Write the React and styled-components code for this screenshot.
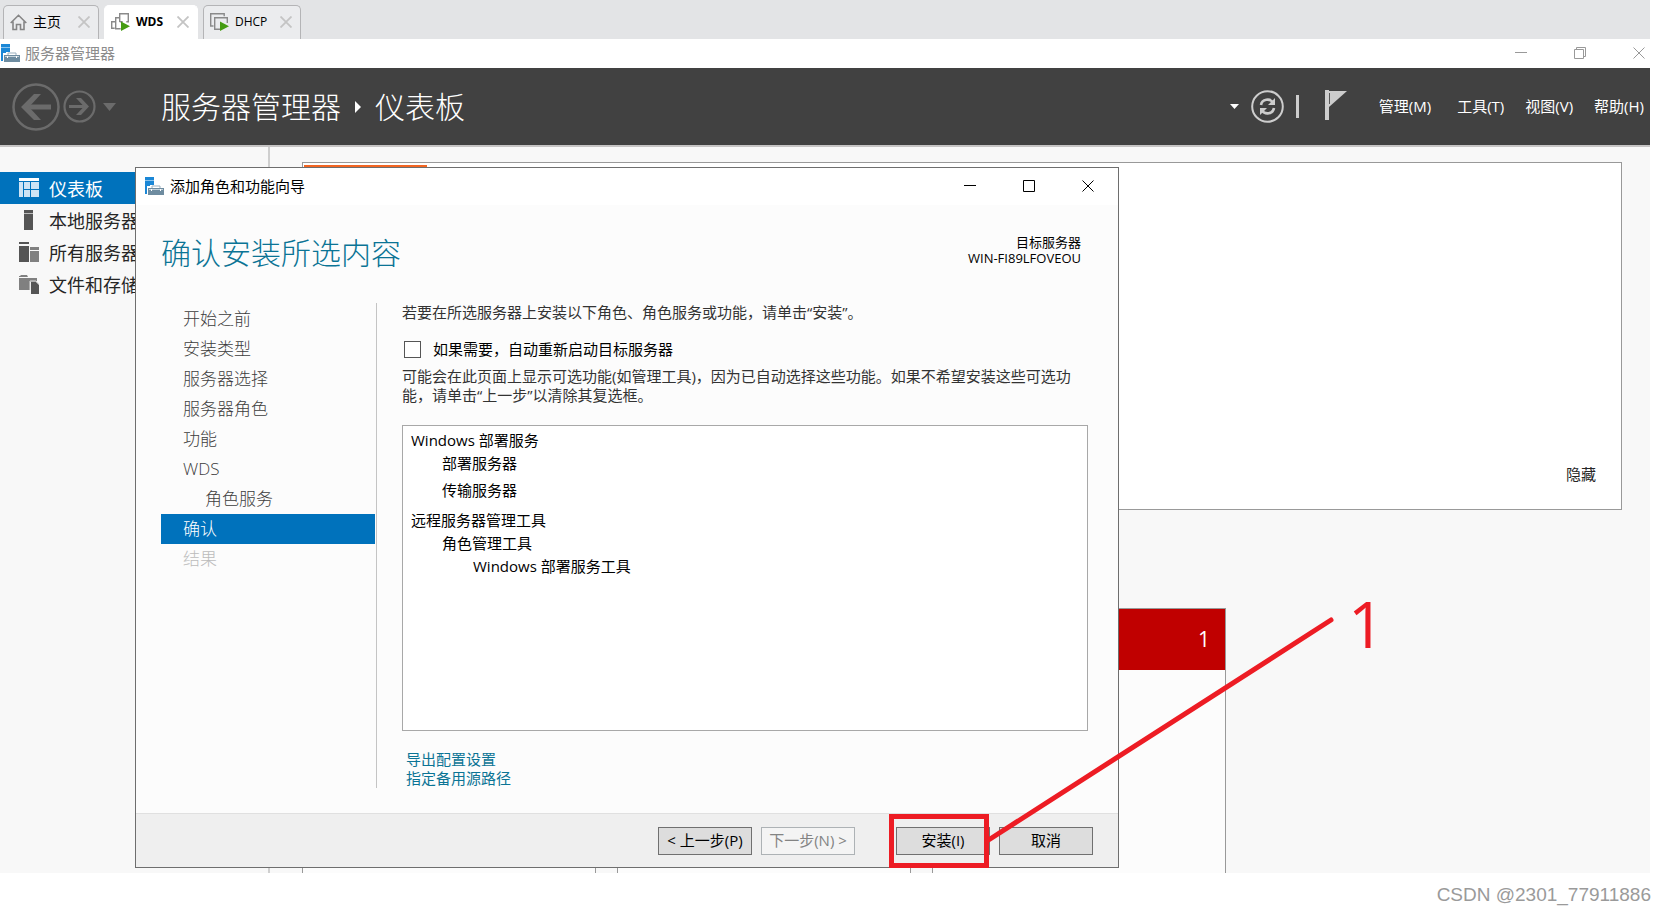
import React from "react";
import styled, { createGlobalStyle } from "styled-components";

const sideItems = [
  { name: "仪表板", icon: "dashboard", active: true },
  { name: "本地服务器", icon: "local" },
  { name: "所有服务器", icon: "all" },
  { name: "文件和存储服务", icon: "files" },
];

const steps = [
  { name: "开始之前" },
  { name: "安装类型" },
  { name: "服务器选择" },
  { name: "服务器角色" },
  { name: "功能" },
  { name: "WDS" },
  { name: "角色服务", nested: true },
  { name: "确认", active: true },
  { name: "结果", disabled: true },
];

const ServerIcon = () => (
  <svg width="20" height="20" viewBox="0 0 20 20">
    <path d="M1 1h9v8H6v9H1z" fill="#1b87d6" />
    <path d="M1 4h9v1H1z" fill="#8cc4ee" />
    <path d="M3 10h17v10H3z" fill="#fff" />
    <path d="M8 12v-2h8v2" fill="none" stroke="#9bb0bf" />
    <path d="M4 12h16v7H4z" fill="#6e8ca0" />
    <path d="M5 13h14v1H5z" fill="#c5d3dc" />
    <path d="M7 13h1v2H7zM16 13h1v2h-1z" fill="#fff" />
  </svg>
);

const VmIcon = ({ stacked }) => (
  <svg width="19" height="18" viewBox="0 0 19 18" fill="none">
    <g stroke="#8a8a8a" strokeWidth="1.4">
      {stacked ? (
        <path d="M8.700 9V.7h8.600v8h-2M8.700 4.700h-4v11h5M4 8.700H.7v6.600h3M8.700 8.700h3" />
      ) : (
        <>
          <path d="M3.500 13H.7V.7h13.500v2.500" />
          <path d="M10 16.300H4.700V4.700h12.600V10" />
        </>
      )}
    </g>
    <path d="M10 8.500l9 4.750-9 4.750z" fill="#459c12" />
  </svg>
);

const HomeIcon = () => (
  <svg width="17" height="17" viewBox="0 0 17 17" fill="none" stroke="#858585" strokeWidth="1.6">
    <path d="M.7 9L8.500 1.300 16.300 9M3 7.500V15.500h3.500v-5h4v5H14V7.500" />
  </svg>
);

const CloseIcon = ({ size = 12, color = "#000", width = 1 }) => (
  <svg width={size} height={size} viewBox="0 0 12 12" stroke={color} strokeWidth={width}>
    <path d="M.5.5l11 11M11.500.5l-11 11" />
  </svg>
);

const MinIcon = ({ color = "#000" }) => (
  <svg width="12" height="12" viewBox="0 0 12 12">
    <path d="M0 5h12v1H0z" fill={color} />
  </svg>
);

const SideIcon = ({ name }) => (
  <svg width="20" height="20" viewBox="0 0 20 20">
    {name === "dashboard" && (
      <>
        <path d="M0 0h20v3H0z" fill="#fff" />
        <path d="M0 4h4v15H0zM5 4h6v7H5zM12 4h8v7h-8zM5 12h6v7H5zM12 12h8v7h-8z" fill="#cfe4f4" />
      </>
    )}
    {name === "local" && (
      <>
        <path d="M5 0h9v3H5z" fill="#555" />
        <path d="M5 3h9v1H5z" fill="#bbb" />
        <path d="M5 4h9v16H5z" fill="#555" />
      </>
    )}
    {name === "all" && (
      <>
        <path d="M0 0h10v2H0zM0 4h10v16H0z" fill="#555" />
        <path d="M11 5h9v3h-9zM11 9h9v11h-9z" fill="#808080" />
      </>
    )}
    {name === "files" && (
      <>
        <path d="M0 2h1l1-1h6l1 2H0zM0 4h18v4h-7v8H0z" fill="#808080" />
        <path d="M12 8h5l3 3v9h-8z" fill="#555" />
        <path d="M11 16V7h6l3 3" fill="none" stroke="#ddd" />
      </>
    )}
  </svg>
);

export default function App() {
  return (
    <Page>
      <GlobalStyle />
      <TabBar>
        <Tab $width="96px">
          <HomeIcon />
          <TabText $size="14px">主页</TabText>
          <IconButton aria-label="关闭主页">
            <CloseIcon color="#c4c4c4" width={1.8} />
          </IconButton>
        </Tab>
        <Tab $width="94px" $active>
          <VmIcon stacked />
          <TabText>WDS</TabText>
          <IconButton aria-label="关闭 WDS">
            <CloseIcon color="#c4c4c4" width={1.8} />
          </IconButton>
        </Tab>
        <Tab $width="98px">
          <VmIcon />
          <TabText>DHCP</TabText>
          <IconButton aria-label="关闭 DHCP">
            <CloseIcon color="#c4c4c4" width={1.8} />
          </IconButton>
        </Tab>
      </TabBar>
      <Screen>
        <TitleBar>
          <ServerIcon />
          <span>服务器管理器</span>
          <Controls $right="5px">
            <IconButton aria-label="最小化">
              <MinIcon color="#999" />
            </IconButton>
            <IconButton aria-label="还原">
              <svg width="12" height="12" viewBox="0 0 12 12" fill="none" stroke="#999">
                <path d="M.5 2.500h9v9h-9zM2.500 2.500v-2h9v9h-2" />
              </svg>
            </IconButton>
            <IconButton aria-label="关闭">
              <CloseIcon color="#999" />
            </IconButton>
          </Controls>
        </TitleBar>

        <Header>
          <History>
            <IconButton aria-label="后退">
              <svg width="48" height="48" viewBox="0 0 48 48" fill="none" stroke="#6b6b6b">
                <circle cx="24" cy="24" r="22.500" strokeWidth="2.500" />
                <path d="M39 24H12" strokeWidth="5" />
                <path d="M22 11h7L17 24l12 13h-7L9 24z" fill="#6b6b6b" stroke="none" />
              </svg>
            </IconButton>
            <IconButton aria-label="前进">
              <svg width="33" height="33" viewBox="0 0 33 33" fill="none" stroke="#6b6b6b">
                <circle cx="16.500" cy="16.500" r="15" strokeWidth="2.200" />
                <path d="M6 16.500h18" strokeWidth="3" />
                <path d="M13 8h5l8 8.500-8 8.500h-5l8-8.500z" fill="#6b6b6b" stroke="none" />
              </svg>
            </IconButton>
            <IconButton aria-label="历史记录">
              <svg width="13" height="8" viewBox="0 0 13 8">
                <path d="M0 0h13L6.500 8z" fill="#6b6b6b" />
              </svg>
            </IconButton>
          </History>
          <Crumbs>
            <span>服务器管理器</span>
            <svg width="6" height="12" viewBox="0 0 6 12">
              <path d="M0 0l6 6-6 6z" fill="#fff" />
            </svg>
            <span>仪表板</span>
          </Crumbs>
          <Tools>
            <IconButton aria-label="更多">
              <svg width="9" height="5" viewBox="0 0 9 5">
                <path d="M0 0h9L4.500 5z" fill="#fff" />
              </svg>
            </IconButton>
            <IconButton aria-label="刷新">
              <svg width="33" height="33" viewBox="0 0 33 33" fill="none" stroke="#cdcdcd">
                <circle cx="16.500" cy="16.500" r="15.300" strokeWidth="2" />
                <path d="M10 15c1-6 9-7 12-2.500M23 18c-1 6-9 7-12 2.500" strokeWidth="2.600" />
                <path d="M24 8v7h-7zM9 25v-7h7z" fill="#cdcdcd" stroke="none" />
              </svg>
            </IconButton>
            <Bar />
            <IconButton aria-label="通知">
              <svg width="22" height="34" viewBox="0 0 22 34">
                <path d="M0 0h4v30H0z" fill="#cdcdcd" />
                <path d="M4 1h18L4 17z" fill="#cdcdcd" />
                <path d="M4.500 3v11" stroke="#555" />
              </svg>
            </IconButton>
          </Tools>
          <Menu>
            <MenuButton>管理(M)</MenuButton>
            <MenuButton>工具(T)</MenuButton>
            <MenuButton>视图(V)</MenuButton>
            <MenuButton>帮助(H)</MenuButton>
          </Menu>
        </Header>

        <Body>
          <Sidebar>
            {sideItems.map((item) => (
              <SideItem key={item.name} href="#" $active={item.active}>
                <SideIcon name={item.icon} />
                {item.name}
              </SideItem>
            ))}
          </Sidebar>
          <Main>
            <Welcome>
              <Orange />
              <HideButton>隐藏</HideButton>
            </Welcome>
            <Tiles>
              <Tile />
              <Tile />
              <Tile>
                <TileAlert>1</TileAlert>
              </Tile>
            </Tiles>
          </Main>

          <Dialog role="dialog" aria-label="添加角色和功能向导">
            <DialogTitle>
              <ServerIcon />
              <span>添加角色和功能向导</span>
              <Controls $right="24px">
                <IconButton aria-label="最小化">
                  <MinIcon />
                </IconButton>
                <IconButton aria-label="最大化">
                  <svg width="12" height="12" viewBox="0 0 12 12" fill="none" stroke="#000">
                    <path d="M.5.5h11v11H.5z" />
                  </svg>
                </IconButton>
                <IconButton aria-label="关闭">
                  <CloseIcon />
                </IconButton>
              </Controls>
            </DialogTitle>
            <DialogHead>
              <h1>确认安装所选内容</h1>
              <Target>
                目标服务器
                <br />
                WIN-FI89LFOVEOU
              </Target>
            </DialogHead>
            <DialogBody>
              <Steps>
                {steps.map((step) => (
                  <Step
                    key={step.name}
                    $nested={step.nested}
                    $active={step.active}
                    $disabled={step.disabled}
                  >
                    {step.name}
                  </Step>
                ))}
              </Steps>
              <Content>
                <Text>若要在所选服务器上安装以下角色、角色服务或功能，请单击“安装”。</Text>
                <CheckLabel>
                  <input type="checkbox" />
                  如果需要，自动重新启动目标服务器
                </CheckLabel>
                <Text>
                  可能会在此页面上显示可选功能(如管理工具)，因为已自动选择这些功能。如果不希望安装这些可选功能，请单击“上一步”以清除其复选框。
                </Text>
                <Summary>
                  <Feature>Windows 部署服务</Feature>
                  <Feature $level={1}>部署服务器</Feature>
                  <Feature $level={1} $space="4px">
                    传输服务器
                  </Feature>
                  <Feature $space="7px">远程服务器管理工具</Feature>
                  <Feature $level={1}>角色管理工具</Feature>
                  <Feature $level={2}>Windows 部署服务工具</Feature>
                </Summary>
                <Links>
                  <a href="#">导出配置设置</a>
                  <a href="#">指定备用源路径</a>
                </Links>
              </Content>
            </DialogBody>
            <DialogFooter>
              <Button>&lt; 上一步(P)</Button>
              <Button disabled>下一步(N) &gt;</Button>
              <Button $apart>安装(I)</Button>
              <Button>取消</Button>
            </DialogFooter>
          </Dialog>

          <Marks width="460" height="270" viewBox="0 0 460 270" fill="none" stroke="#ed1c24">
            <path d="M11.500 216.500h95v49h-95z" strokeWidth="5" />
            <path d="M107 241L451 20" strokeWidth="5" strokeLinecap="round" />
          </Marks>
          <MarkNumber>1</MarkNumber>
        </Body>
      </Screen>
      <Watermark>CSDN @2301_77911886</Watermark>
    </Page>
  );
}

const GlobalStyle = createGlobalStyle`
  * {
    box-sizing: border-box;
  }
  body {
    margin: 0;
    background: #fff;
    color: #000;
    font-family: "Open Sans", "Noto Sans CJK SC", sans-serif;
    font-size: 15px;
  }
  button {
    font: inherit;
    color: inherit;
  }
  svg {
    display: block;
    flex: none;
  }
`;

const Page = styled.div`
  min-height: 100vh;
  display: flex;
  flex-direction: column;
  overflow: hidden;
`;

const TabBar = styled.div`
  display: flex;
  align-items: flex-end;
  gap: 5px;
  height: 39px;
  margin-right: 16px;
  padding-left: 3px;
  background: #e3e4e6;
`;

const Tab = styled.div`
  display: flex;
  align-items: center;
  width: ${(p) => p.$width};
  height: 34px;
  padding: 0 8px 1px 6px;
  border: 1px solid ${(p) => (p.$active ? "#fff" : "#b4b4b6")};
  border-bottom: none;
  border-radius: 5px 5px 0 0;
  background: ${(p) => (p.$active ? "#fff" : "#ebecee")};
  font-weight: ${(p) => (p.$active ? 700 : 400)};
`;

const TabText = styled.span`
  flex: 1;
  padding-left: 6px;
  font-size: ${(p) => p.$size || "12px"};
  line-height: 20px;
`;

const IconButton = styled.button`
  display: flex;
  padding: 0;
  border: none;
  background: none;
`;

const Screen = styled.div`
  flex: 1;
  display: flex;
  flex-direction: column;
  margin-right: 16px;
`;

const TitleBar = styled.div`
  display: flex;
  align-items: center;
  gap: 5px;
  height: 29px;
  padding-bottom: 2px;
  background: #fff;
  color: #8c8c8c;
`;

const Controls = styled.div`
  display: flex;
  gap: 47px;
  margin-left: auto;
  margin-right: ${(p) => p.$right};
`;

const Header = styled.header`
  display: flex;
  align-items: center;
  height: 79px;
  padding: 0 6px 0 12px;
  border-bottom: 2px solid #c6c4c4;
  background: #414141;
  color: #fff;
`;

const History = styled.div`
  display: flex;
  align-items: center;
  gap: 3px;

  button:last-child {
    margin-left: 4px;
  }
`;

const Crumbs = styled.div`
  display: flex;
  align-items: center;
  gap: 14px;
  margin-left: 45px;
  font-size: 30px;
  font-weight: 300;
  line-height: 40px;
`;

const Tools = styled.div`
  display: flex;
  align-items: center;
  gap: 12px;
  margin-left: auto;

  button:last-child {
    margin-left: 14px;
  }
`;

const Bar = styled.div`
  width: 3px;
  height: 23px;
  background: #cdcdcd;
`;

const Menu = styled.nav`
  display: flex;
  gap: 21px;
  margin-left: 32px;
`;

const MenuButton = styled.button`
  padding: 0 0 2px;
  border: none;
  background: none;
  line-height: 20px;

  &:first-child {
    margin-right: 5px;
  }
`;

const Body = styled.div`
  position: relative;
  flex: 1;
  display: flex;
  min-height: 726px;
  background: #f8f8f8;
`;

const Sidebar = styled.nav`
  display: flex;
  flex-direction: column;
  width: 270px;
  padding-top: 25px;
  border-right: 2px solid #cfcfcf;
`;

const SideItem = styled.a`
  display: flex;
  align-items: center;
  gap: 10px;
  height: 32px;
  padding-left: 19px;
  background: ${(p) => (p.$active ? "#0072bc" : "transparent")};
  color: ${(p) => (p.$active ? "#fff" : "#262626")};
  font-size: 18px;
  text-decoration: none;
`;

const Main = styled.main`
  flex: 1;
  display: flex;
  flex-direction: column;
  padding: 15px 28px 0 32px;
`;

const Welcome = styled.section`
  display: flex;
  flex-direction: column;
  justify-content: space-between;
  height: 348px;
  padding: 2px 25px 25px 1px;
  border: 1px solid #999;
  background: #fff;
`;

const Orange = styled.div`
  width: 123px;
  height: 100px;
  background: #f26522;
`;

const HideButton = styled.button`
  align-self: flex-end;
  padding: 0;
  border: none;
  background: none;
  color: #262626;
  line-height: 20px;
`;

const Tiles = styled.div`
  flex: 1;
  display: flex;
  gap: 21px;
  margin-top: 98px;
`;

const Tile = styled.section`
  width: 294px;
  border: 1px solid #999;
  border-bottom: none;
  background: #fcfcfc;
`;

const TileAlert = styled.div`
  height: 61px;
  padding-right: 15px;
  background: #c00000;
  color: #fff;
  font-size: 21px;
  line-height: 61px;
  text-align: right;
`;

/* floating wizard window */
const Dialog = styled.section`
  position: absolute;
  left: 135px;
  top: 20px;
  display: flex;
  flex-direction: column;
  width: 984px;
  border: 1px solid #6e6e6e;
  background: #fcfcfc;
`;

const DialogTitle = styled.div`
  display: flex;
  align-items: center;
  gap: 6px;
  height: 37px;
  padding: 0 0 2px 8px;
  background: #fff;
`;

const DialogHead = styled.div`
  display: flex;
  justify-content: space-between;
  height: 98px;
  padding: 29px 37px 0 25px;

  h1 {
    margin: 0;
    color: #0b7495;
    font-size: 30px;
    font-weight: 300;
    line-height: 38px;
  }
`;

const Target = styled.div`
  font-size: 13px;
  line-height: 16px;
  text-align: right;
`;

const DialogBody = styled.div`
  display: flex;
  padding: 0 30px 25px 25px;
`;

const Steps = styled.ul`
  width: 216px;
  margin: 0;
  padding: 1px 1px 0 0;
  border-right: 1px solid #c4c4c4;
  list-style: none;
`;

const Step = styled.li`
  height: 30px;
  padding-left: ${(p) => (p.$nested ? "44px" : "22px")};
  background: ${(p) => (p.$active ? "#0072bc" : "transparent")};
  color: ${(p) => (p.$active ? "#fff" : p.$disabled ? "#bbb" : "#3c3c3c")};
  font-size: 17px;
  font-weight: 300;
  line-height: 30px;
`;

const Content = styled.div`
  flex: 1;
  padding-left: 25px;
`;

const Text = styled.p`
  margin: 0;
  color: #333;
  line-height: 19px;
`;

const CheckLabel = styled.label`
  display: flex;
  align-items: center;
  gap: 12px;
  margin: 17px 0 8px 2px;
  line-height: 20px;

  input {
    appearance: none;
    width: 17px;
    height: 17px;
    margin: 0;
    border: 1px solid #555;
    background: #fff;
  }
`;

const Summary = styled.div`
  height: 306px;
  margin-top: 20px;
  padding: 3px 8px;
  border: 1px solid #a8a8a8;
  background: #fff;
`;

const Feature = styled.div`
  padding-top: ${(p) => p.$space || "0"};
  padding-left: ${(p) => (p.$level || 0) * 31}px;
  line-height: 23px;
`;

const Links = styled.div`
  display: flex;
  flex-direction: column;
  align-items: flex-start;
  padding: 19px 0 0 4px;

  a {
    color: #0b7495;
    line-height: 19px;
    text-decoration: none;
  }
`;

const DialogFooter = styled.div`
  display: flex;
  justify-content: flex-end;
  gap: 9px;
  height: 54px;
  padding: 13px 25px 0 0;
  border-top: 1px solid #e0e0e0;
  background: #efefef;
`;

const Button = styled.button`
  width: 94px;
  height: 28px;
  margin-left: ${(p) => (p.$apart ? "32px" : "0")};
  padding: 0 0 2px;
  border: 1px solid #707070;
  background: #ddd;
  line-height: 20px;
  white-space: nowrap;

  &:disabled {
    border-color: #adb2b5;
    background: #f4f4f4;
    color: #838383;
  }
`;

/* red pen marks over the window */
const Marks = styled.svg`
  position: absolute;
  left: 880px;
  top: 453px;
  pointer-events: none;
`;

const MarkNumber = styled.span`
  position: absolute;
  left: 1348px;
  top: 442px;
  color: #ed1c24;
  font-size: 64px;
  font-weight: 500;
  line-height: 70px;
`;

const Watermark = styled.footer`
  height: 40px;
  padding-right: 15px;
  color: #9a9a9a;
  font-family: "Liberation Sans", sans-serif;
  font-size: 19px;
  line-height: 44px;
  text-align: right;
`;
